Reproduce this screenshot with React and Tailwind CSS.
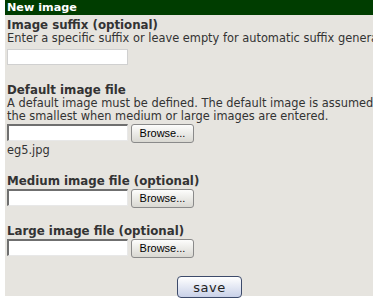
export default function App() {
  const font = { fontFamily: '"DejaVu Sans", Verdana, sans-serif' };
  const Browse = () => (
    <div className="flex items-start h-[19px]">
      <div className="w-[121px] h-[17px] bg-white border-t-2 border-l-2 border-t-[#6f6f6f] border-l-[#6f6f6f] border-b border-r border-b-[#e8e8e8] border-r-[#e8e8e8]" />
      <div
        className="ml-[3px] w-[63px] h-[19px] rounded-[3px] border border-[#8a8a8a] bg-gradient-to-b from-[#fdfdfc] to-[#d9d8d2] flex items-center justify-center text-[11px] text-black"
        style={{ fontFamily: '"Liberation Sans", Arial, sans-serif' }}
      >
        Browse...
      </div>
    </div>
  );
  return (
    <div className="w-[373px] h-[300px] bg-white overflow-hidden" style={font}>
      <div className="ml-[5px] w-[400px] h-[296px] bg-[#e6e4df] text-[#333] text-[11.4px] leading-[13px]">
        <div className="h-[15px] bg-[#003d00] text-white font-bold text-[11.2px] pl-[2px] leading-[15px]">New image</div>
        <div className="pl-[2px]">
          <div className="mt-[3px] h-[14px] font-bold text-[11.8px] leading-[14px]">Image suffix (optional)</div>
          <div className="h-[13px] leading-[13px] whitespace-nowrap">Enter a specific suffix or leave empty for automatic suffix generation.</div>
          <div className="mt-[4px] w-[121px] h-[16px] bg-white border border-[#d0d0d0]" />
          <div className="mt-[18px] h-[14px] font-bold text-[11.8px] leading-[14px]">Default image file</div>
          <div className="w-[378px] leading-[13px]">A default image must be defined. The default image is assumed the smallest when medium or large images are entered.</div>
          <div className="mt-[1px]"><Browse /></div>
          <div className="mt-[1px] h-[13px] leading-[13px]">eg5.jpg</div>
          <div className="mt-[17px] h-[14px] font-bold text-[11.8px] leading-[14px]">Medium image file (optional)</div>
          <div className="mt-[1px]"><Browse /></div>
          <div className="mt-[16px] h-[14px] font-bold text-[11.8px] leading-[14px]">Large image file (optional)</div>
          <div className="mt-[1px]"><Browse /></div>
          <div className="mt-[18px] flex">
            <div
              className="ml-[170px] w-[65px] h-[22px] rounded-[4px] border border-[#3d4b6b] bg-gradient-to-b from-white to-[#c9d1e8] flex items-center justify-center text-[13px] tracking-[0.5px] text-[#222]"
              style={font}
            >
              save
            </div>
          </div>
        </div>
      </div>
    </div>
  );
}
